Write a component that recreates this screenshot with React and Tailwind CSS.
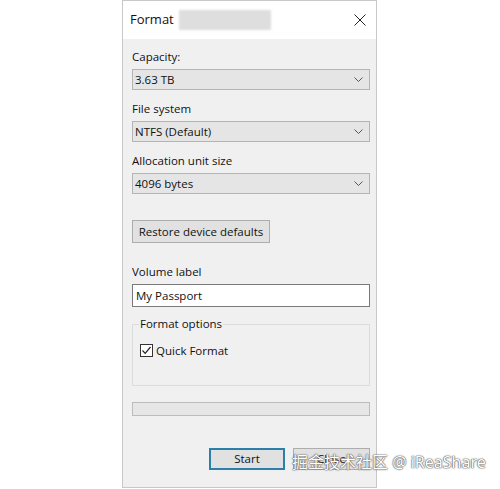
import React from 'react';

const font = { fontFamily: '"Open Sans", "Noto Sans", sans-serif' };

function Chevron() {
  return (
    <svg width="9" height="5" viewBox="0 0 9 5" className="mr-[6px]">
      <path d="M0.5 0.5 L4.5 4.5 L8.5 0.5" fill="none" stroke="#555" strokeWidth="1" />
    </svg>
  );
}

function Combo({ value }) {
  return (
    <div className="h-[21px] bg-[#e5e5e5] border border-[#b4b4b4] flex items-center justify-between">
      <span className="pl-[2px] text-[11.5px] text-[#111]">{value}</span>
      <Chevron />
    </div>
  );
}

function Label({ children }) {
  return <div className="h-[16px] leading-[16px] text-[11.5px] text-[#111] mb-[4px]">{children}</div>;
}

export default function App() {
  return (
    <div className="w-[500px] h-[489px] bg-white" style={font}>
      <div className="ml-[122px] w-[255px] h-[488px] border border-[#c8c8c8] bg-[#f0f0f0] flex flex-col">
        {/* title bar */}
        <div className="h-[38px] bg-white flex items-center pl-[7px] pr-[8px]">
          <span className="text-[13px] text-[#111]">Format</span>
          <div className="ml-[5px] w-[92px] h-[20px] bg-[#dedede] blur-[1px]" />
          <svg width="12" height="12" viewBox="0 0 12 12" className="ml-auto mr-[2px]">
            <path d="M0.5 0.5 L11.5 11.5 M11.5 0.5 L0.5 11.5" stroke="#222" strokeWidth="1" />
          </svg>
        </div>

        <div className="flex flex-col pl-[9px] pr-[6px] pt-[10px]">
          <Label>Capacity:</Label>
          <Combo value="3.63 TB" />
          <div className="h-[11px]" />
          <Label>File system</Label>
          <Combo value="NTFS (Default)" />
          <div className="h-[11px]" />
          <Label>Allocation unit size</Label>
          <Combo value="4096 bytes" />

          <button className="mt-[26px] w-[138px] h-[23px] bg-[#e1e1e1] border border-[#adadad] text-[11.5px] text-[#111] flex items-center justify-center">
            Restore device defaults
          </button>

          <div className="mt-[21px]">
            <Label>Volume label</Label>
          </div>
          <div className="h-[23px] bg-white border border-[#7a7a7a] flex items-center pl-[3px] text-[11.5px] text-[#111]">
            My Passport
          </div>

          <div className="relative mt-[17px] h-[62px] border border-[#dcdcdc]">
            <span className="absolute left-[6px] top-[-9px] px-[1px] bg-[#f0f0f0] text-[11.5px] leading-[16px] text-[#111]">
              Format options
            </span>
            <div className="mt-[17px] ml-[7px] flex items-center">
              <div className="w-[13px] h-[13px] border border-[#333] bg-white flex items-center justify-center">
                <svg width="11" height="11" viewBox="0 0 11 11">
                  <path d="M1.5 5.5 L4.2 8.3 L9.5 2" fill="none" stroke="#222" strokeWidth="1.2" />
                </svg>
              </div>
              <span className="ml-[3px] text-[11.5px] text-[#111]">Quick Format</span>
            </div>
          </div>

          <div className="mt-[16px] h-[14px] bg-[#e6e6e6] border border-[#bcbcbc]" />

          <div className="relative mt-[32px] flex justify-end gap-[8px]">
            <button className="w-[76px] h-[22px] bg-[#e1e1e1] border-2 border-[#2b7fa8] text-[11.5px] text-[#111] flex items-center justify-center">
              Start
            </button>
            <button className="w-[77px] h-[22px] bg-[#e1e1e1] border border-[#adadad] text-[11.5px] text-[#111] flex items-center justify-center">
              Close
            </button>
            <span
              className="absolute left-[160px] top-[2px] whitespace-nowrap text-[16px] text-white [text-shadow:0_0_1px_#555,0_0_1px_#555,0_0_2px_#777]"
              style={{ fontFamily: '"Noto Sans", "Noto Sans CJK SC", sans-serif' }}
            >
              掘金技术社区 @ iReaShare
            </span>
          </div>
        </div>
      </div>
    </div>
  );
}
